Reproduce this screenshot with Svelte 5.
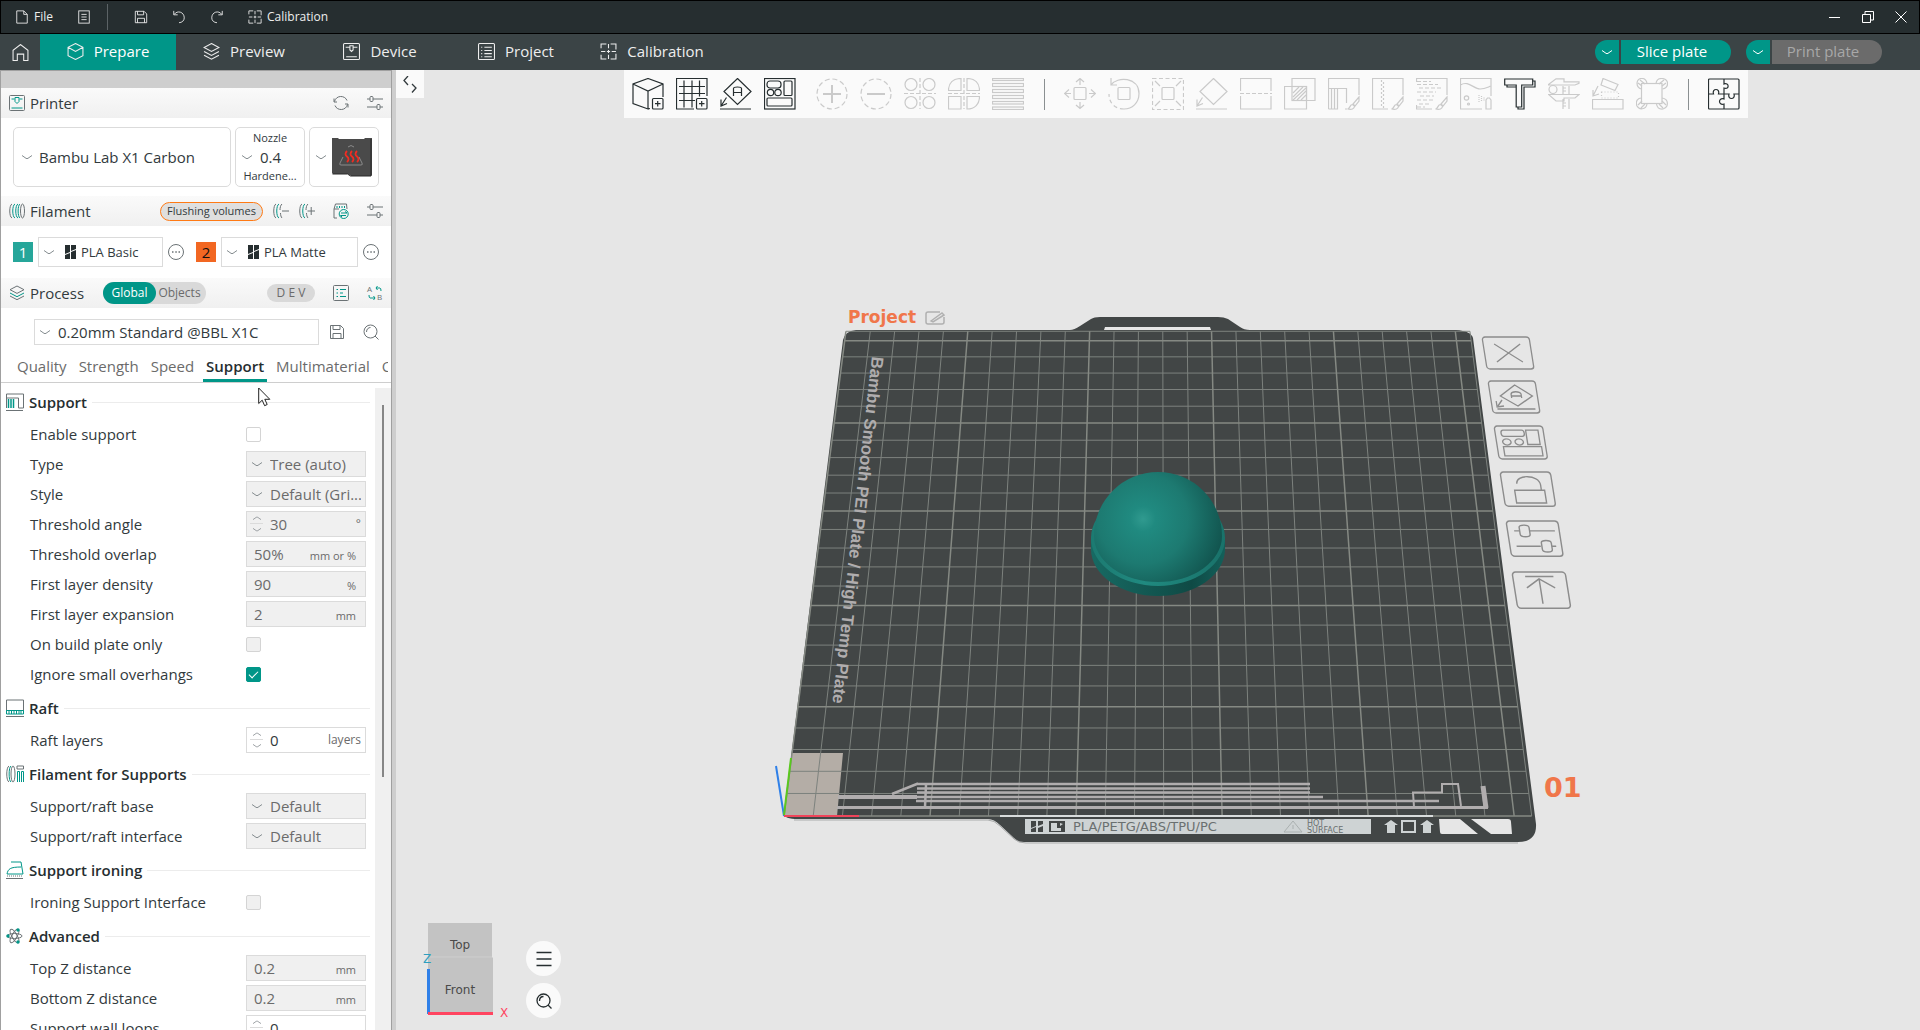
<script>
	const icons = {
		file: '<path d="M2 1h8l4 4v10H2zM10 1v4h4"/>',
		menu: '<rect x="2" y="1" width="12" height="14"/><path d="M5 5h6M5 8h6M5 11h6"/>',
		save: '<path d="M1.500 1.500h10l3 3v10h-13zM4 1.500v4h7v-4M4 14.500v-5h8v5"/>',
		undo: '<path d="M2 1v4.500h4.500M2.500 5C6 0 14 2 14 9c0 3-2.500 5.500-6 5.500"/>',
		redo: '<path d="M14 1v4.500H9.500M13.500 5C10 0 2 2 2 9c0 3 2.500 5.500 6 5.500"/>',
		calib: '<path d="M1 5V1h5M10 1h5v5M15 10v5h-5M6 15H1v-4M8 1v4M8 11v4M1 8h4M11 8h4M8 6.500v3M6.500 8h3"/>',
		home: '<path d="M1 15.500V6l7-5.500L15 6v9.500h-4V9.500H5v6z"/>',
		cube: '<path d="M8 .5l7 3.500v8L8 15.500 1 12V4zM1 4l7 4 7-4"/>',
		layers: '<path d="M8 .5l7 3.700-7 3.700-7-3.700zM1 8l7 3.700L15 8M1 11.500l7 3.700 7-3.700"/>',
		process: '<path d="M8 1l7 3.700-7 3.700-7-3.700zM1 11l7 3.700 7-3.700"/><path d="M1 8l7 3.700L15 8" stroke="#009688"/>',
		device: '<rect x=".5" y=".5" width="15" height="15" rx="1"/><path d="M3 13h10M2.500 4h4M9.500 4h4M6.500 2.500h3v4L8 8 6.500 6.500z"/>',
		printer: '<rect x=".5" y=".5" width="15" height="15" rx="1"/><path d="M2.500 13h11M2.500 4h3M10.500 4h3M6 2.500h4v4L8 8.500 6 6.500z" stroke="#009688"/>',
		project: '<rect x=".5" y=".5" width="15" height="15" rx="1"/><path d="M3 4h1M6 4h7M3 7h1M6 7h7M3 10h1M6 10h7M3 13h1M6 13h7"/>',
		sync: '<path d="M1.500 6.500C3 0 12 0 14 5.500M14.500 9.500C13 16 4 16 2 10.500M1 3.500v3.500h3M15 12.500V9h-3"/>',
		sliders: '<path d="M0 4h3M6 4h10M0 12h10M13 12h3"/><rect x="3" y="1.500" width="3" height="5" rx="1"/><rect x="10" y="9.500" width="3" height="5" rx="1"/>',
		spool: '<ellipse cx="13.500" cy="8" rx="2" ry="7"/><path d="M3 1C0 2 0 14 3 15" /><path d="M6 1C3 2 3 14 6 15M9 1C6 2 6 14 9 15M11 1C8.500 2 8.500 14 11 15" stroke="#009688"/>',
		spoolMinus: '<path d="M3 1C0 2 0 14 3 15M9 1C7.500 2 7 5 7 7M7.500 10c0 2 .5 4 1.500 5M9 8h7"/><path d="M6 1C3 2 3 14 6 15" stroke="#009688"/>',
		spoolPlus: '<path d="M3 1C0 2 0 14 3 15M9 1C7.500 2 7 5 7 7M7.500 10c0 2 .5 4 1.500 5M8.500 8H16M12.200 4v8"/><path d="M6 1C3 2 3 14 6 15" stroke="#009688"/>',
		ams: '<path d="M4 15H1V6L2.500 1h11L14 6M1 6h5"/><path d="M4 3v2M6.500 3v2M9 3v2M11.500 3v2M8 10h6l-2-1.500M13 12.500H7.500L9 14" stroke="#009688"/><circle cx="10.700" cy="11" r="4.500" stroke="#009688"/>',
		more: '<circle cx="8" cy="8" r="7.500"/><path d="M4 8h1.500M7.300 8h1.500M10.500 8H12" stroke-width="1.500"/>',
		list: '<rect x=".5" y=".5" width="15" height="15" rx="1"/><path d="M3.500 4.500H5M7 4.500h6M3.500 8H5M7 8h3M3.500 11.500H5M7 11.500h6" stroke="#009688"/>',
		search: '<circle cx="7.500" cy="7.500" r="6.500"/><path d="M12 12l3.500 3.500M3.500 8c0-3 2-4.500 4-4.500"/>',
		support: '<path d="M.5 15V1h17v14h-5V5H.5M0 17.500h17"/><path d="M2.500 6v9M5 6v9M7.500 6v9" stroke="#009688" stroke-width="1.500"/>',
		raft: '<path d="M.5 12V1h17v11M0 17.500h18"/><path d="M.5 11.500v3.500h17v-3.500zM3 12v3M5.500 12v3M8 12v3M10.500 12v3M13 12v3M15 12v3" stroke="#009688"/>',
		filSupport: '<ellipse cx="7" cy="9" rx="2" ry="8"/><path d="M3 1C0 2 0 16 3 17M11 1h6.500v3H11z"/><path d="M5 1C2.500 2 2.500 16 5 17M11.500 17V6.500h2V17M15.500 17V6.500h2V17" stroke="#009688"/>',
		iron: '<path d="M1 13C2 8 4 6 15 6M5 1h10l2 12H1" stroke="#009688"/><path d="M1 15h16" stroke-dasharray="1 1"/><path d="M0 17.500h17"/>',
		atom: '<g><ellipse cx="8.500" cy="9" rx="7.500" ry="2.500"/><ellipse cx="8.500" cy="9" rx="7.500" ry="2.500" transform="rotate(60 8.500 9)"/><ellipse cx="8.500" cy="9" rx="7.500" ry="2.500" transform="rotate(120 8.500 9)"/></g><g fill="#009688" stroke="none"><circle cx="2" cy="9" r="1.700"/><circle cx="12" cy="3" r="1.700"/><circle cx="12" cy="15" r="1.700"/></g>',
		down: '<path d="M0 .5L4 3.300Q5 4 6 3.300L10 .5"/>'
	};

	const plusBox = '<rect x="20.500" y="20.500" width="10.500" height="10.500" rx="1"/><path d="M25.700 23v5.500M23 25.700h5.500"/>';
	const brush = '<path d="M31 19l-6 7 2 2 4-5zM24.500 26.500c-3 0-2 4-5 4.500 4 1 7 0 7-3z"/>';

	const tools = {
		addCube: '<path d="M31 19V6L16 .5 1 6v19.500L16 31V13M1 6l15 7 15-7M16 31l2-.5"/>' + plusBox,
		addPlate: '<path d="M18 31H.5V.5H31V18M8 2.500v27M16 2.500v27M23.500 2.500v16M3 8.500h26M3 15.500h26M3 22.500h16"/>' + plusBox,
		orient: '<path d="M17.500 .5L31 13.500 17.500 26.500 4 13.500zM13.500 18v-7.500c0-2 8-2 8 0V18M13.500 14.500h8M0 31h31M6.500 19.500L1 28M1 21.500V28l6-2.500"/>',
		arrange: '<rect x=".5" y=".5" width="30.500" height="30.500"/><rect x="3" y="3" width="14" height="7" rx="3"/><rect x="20" y="3" width="8" height="14.500" rx="1"/><circle cx="6.500" cy="14.500" r="3.200"/><circle cx="14" cy="14.500" r="3.200"/><rect x="3" y="20" width="25" height="8" rx="1"/>',
		plus: '<circle cx="16" cy="16" r="15" stroke-dasharray="5 2.850"/><path d="M7 16h18M16 7v18" stroke-width="2"/>',
		minus: '<circle cx="16" cy="16" r="15" stroke-dasharray="5 2.850"/><path d="M7 16h18" stroke-width="2"/>',
		splitObj: '<circle cx="7" cy="6.500" r="6"/><circle cx="25" cy="6.500" r="6"/><circle cx="7" cy="24.500" r="6"/><circle cx="25" cy="24.500" r="6"/><path d="M16 0v31M0 15.500h32" stroke-dasharray="4 2"/>',
		splitPart: '<path d="M13 .5v12H.5C.5 5 5 .5 13 .5zM19 .5v12h12.500C31.500 5 27 .5 19 .5zM13 31V18.500H.5v12.500zM19 31V18.500h12.500C31.500 26 27 31 19 31z"/><path d="M16 0v31M0 15.500h32" stroke-dasharray="4 2"/>',
		layerH: '<rect x=".5" y=".5" width="31" height="2"/><rect x=".5" y="5.500" width="31" height="3"/><rect x=".5" y="11.500" width="31" height="3"/><rect x=".5" y="17.500" width="31" height="3"/><rect x=".5" y="23.500" width="31" height="2.500"/><rect x=".5" y="29" width="31" height="2.500"/>',
		move: '<rect x="10" y="9.500" width="12" height="12" rx="1"/><path d="M16 7V1M12 4l4-3.500L20 4M16 24v6M12 27l4 3.500 4-3.500M7 15.500H1M5 11.500l-4.500 4L5 19.500M25 15.500h6M27 11.500l4.500 4-4.500 4"/>',
		rotate: '<rect x="10" y="9.500" width="12" height="12" rx="1"/><path d="M3 0v7h6M3 7C9-2 31-1 31 15.500 31 25 24 31 16 31"/><path d="M16 31C7 31 1 25 1 16" stroke-dasharray="4 3"/>',
		scale: '<rect x=".5" y=".5" width="31" height="31" stroke-dasharray="4 2.500"/><rect x="10" y="9.500" width="12" height="12" rx="1"/><path d="M8 8L3 3M24 8l5-5M8 23l-5 5M24 23l5 5"/>',
		layFace: '<path d="M17.500 .5L31 13.500 17.500 26.500 4 13.500zM0 31h31M6.500 19.500L1 28M1 21.500V28l6-2.500"/>',
		cut: '<path d="M.5 13V.5H31V13M.5 18v13H31V18"/><path d="M0 15.500h32" stroke-dasharray="4 2"/>',
		boolean: '<path d="M8 8.500V.5h23v22h-8M22.500 8.500H.5V31h22z"/><rect x="8" y="8.500" width="14.500" height="14"/><path d="M9 15l6-6M9 19L19 9M9 22L22 10M13 22l9-9M17 22l5-5"/>',
		paintSup: '<path d="M.5 31V.5H31V17M.5 10.500h18V25M.5 31h9V10.500M3.500 11v20M6.500 11v20M17 31h2"/>' + brush,
		seam: '<path d="M16 31H.5V.5H31V17"/><path d="M9.500 2v27" stroke-dasharray="2 2"/><path d="M11.500 4v26" stroke-dasharray="2 2"/>' + brush,
		fuzzy: '<path d="M16 31H.5V27M.5 4V.5H31V17"/><path d="M1 3.500h14M1 6.500h21M3 10h22M1 14h19M4 18h14M1 22h18M3 26h11M1 29h8" stroke-dasharray="4 2"/>' + brush,
		color: '<path d="M22 31H.5V.5H31V18M.5 7C8 2 14 11 20 11c5 0 8-2 11-3"/><circle cx="6.500" cy="20" r="2.200"/><circle cx="8.500" cy="26" r="1"/><path d="M26 31v-9l1.500-2h2L31 22v9z"/><path d="M19 17v8M21.500 18v6M24 19.500v3" stroke-dasharray="1 1"/>',
		text: '<path d="M.7 1h28v6h-11v22h-5.500V7H.7z"/><path d="M28.700 3H31v6H20v22h-6v-2M3 7v2h9"/>',
		measure: '<path d="M.5 6.500L8 .8h8v3h15v1.500L27 7H.5zM.5 16.500h30.500L27 20H16v3H8zM15 8v8M21 8v8M15 21v10M21 21v10M15 10h3M15 13h3M15 25h3M15 28h3"/><circle cx="5" cy="11.500" r="4"/>',
		assemblyFace: '<path d="M11 .5l15 6-3 6L9 7zM.5 21.500H31V31H.5zM6 8l-5 10M1 12v6l6-2"/><path d="M9.500 14h17v6h-17z" stroke-dasharray="1 2"/>',
		brim: '<rect x="5.500" y="5.500" width="20.500" height="20"/><path d="M5.500 11C-1 9 0 0 6 .5c3 0 4.500 2 5 5M20 5.500c1-7 10-6 11.500-1 .5 4-2 6-5 6.500M26 20c7 1 7 9 1 11-4 .5-6-2-6.500-5M11 26c-1 6-8 6-10 2-2-5 1-8 4.500-8M2 5l4 3M4 2l5 4M30 5l-4 3M28 2l-5 4M2 27l4-4M5 30l4-4M30 27l-4-4M27 30l-4-4"/>',
		assembly: '<rect x=".5" y="1" width="30.500" height="30" rx="1"/><path d="M16 1v5c5-2 6 6 0 4v6M16 16v5c-6-2-6 7 0 5v5M.5 16h5c-2-6 7-6 5 0h5.500M16 16h5c-2 6 7 6 5 0h5"/>'
	};

	const toolGroups = [
		{ on: true, names: ['addCube', 'addPlate', 'orient', 'arrange'] },
		{ on: false, names: ['plus', 'minus', 'splitObj', 'splitPart', 'layerH'] },
		{ on: false, sep: true, names: ['move', 'rotate', 'scale', 'layFace', 'cut', 'boolean', 'paintSup', 'seam', 'fuzzy', 'color', 'text', 'measure', 'assemblyFace', 'brim'] },
		{ on: true, sep: true, names: ['assembly'] }
	];

	const mainTabs = [
		['Prepare', 'cube'],
		['Preview', 'layers'],
		['Device', 'device'],
		['Project', 'project'],
		['Calibration', 'calib']
	];

	const settingTabs = ['Quality', 'Strength', 'Speed', 'Support', 'Multimaterial', 'Others'];

	const sections = [
		{ title: 'Support', icon: 'support', rows: [
			{ label: 'Enable support', type: 'check' },
			{ label: 'Type', type: 'select', value: 'Tree (auto)', off: true },
			{ label: 'Style', type: 'select', value: 'Default (Gri...', off: true },
			{ label: 'Threshold angle', type: 'spin', value: '30', unit: '°', off: true },
			{ label: 'Threshold overlap', type: 'text', value: '50%', unit: 'mm or %', off: true },
			{ label: 'First layer density', type: 'text', value: '90', unit: '%', off: true },
			{ label: 'First layer expansion', type: 'text', value: '2', unit: 'mm', off: true },
			{ label: 'On build plate only', type: 'check', off: true },
			{ label: 'Ignore small overhangs', type: 'check', checked: true }
		] },
		{ title: 'Raft', icon: 'raft', rows: [
			{ label: 'Raft layers', type: 'spin', value: '0', unit: 'layers' }
		] },
		{ title: 'Filament for Supports', icon: 'filSupport', rows: [
			{ label: 'Support/raft base', type: 'select', value: 'Default', off: true },
			{ label: 'Support/raft interface', type: 'select', value: 'Default', off: true }
		] },
		{ title: 'Support ironing', icon: 'iron', rows: [
			{ label: 'Ironing Support Interface', type: 'check', off: true }
		] },
		{ title: 'Advanced', icon: 'atom', rows: [
			{ label: 'Top Z distance', type: 'text', value: '0.2', unit: 'mm', off: true },
			{ label: 'Bottom Z distance', type: 'text', value: '0.2', unit: 'mm', off: true },
			{ label: 'Support wall loops', type: 'spin', value: '0', unit: '' }
		] }
	];

	// bed millimetres -> scene coordinates
	function project(u, v) {
		const w = 1 + 0.000774 * v;
		return [(784 + 2.9207 * u + 0.8965 * v) / w, (816 - 1.637 * v) / w];
	}

	function line(a, b) {
		return 'M' + project(...a).join(' ') + 'L' + project(...b).join(' ');
	}

	let thin = '';
	let thick = '';
	for (let i = 0; i <= 25; i++) {
		const d = line([i * 10, 0], [i * 10, 256]) + line([0, i * 10], [256, i * 10]);
		if (i % 5 == 0) thick += d;
		else thin += d;
	}
	thin += line([256, 0], [256, 256]) + line([0, 256], [256, 256]);

	// plate buttons, drawn in a 48x32 box and skewed onto the bed plane
	const plateIcons = [
		{ x: 1482, y: 337, s: 1, d: 'M11 7l26 18M37 7L11 25' },
		{ x: 1488, y: 381, s: 1, d: 'M26 4l16 11-16 10L10 15zM21 17v-4c1-3 9-3 10 0v4M21 15h10M5 28h38M11 19l-5 6M5 20v6l7-1' },
		{ x: 1494, y: 426, s: 1.03, d: 'M8 4h18c3 0 3 6 0 6H8c-3 0-3-6 0-6zM30 4h12v14H30zM6 20h37v9H6zM10 12.500a4 3 0 1 0 .1 0M22 12.500a4 3 0 1 0 .1 0' },
		{ x: 1500, y: 472, s: 1.07, d: 'M11 17h28v12H11zM14 11C14 2 36 2 36 12v5' },
		{ x: 1506, y: 521, s: 1.1, d: 'M6 9h5M20 9h23M6 23h22M38 23h4M11 6c0-3 9-3 9 0v6c0 3-9 3-9 0zM29 20c0-3 9-3 9 0v6c0 3-9 3-9 0z' },
		{ x: 1512, y: 572, s: 1.13, d: 'M11 4h25M23 6v22M11 14L23 6l13 8' }
	];
</script>

{#snippet icon(name, size = 16)}
	<svg class="icon" width={size} height={size} viewBox={size == 18 ? '0 0 18 18' : '0 0 16 16'} aria-hidden="true">{@html icons[name]}</svg>
{/snippet}

{#snippet chevron()}
	<svg class="chev" width="10" height="5" viewBox="0 0 10 5" aria-hidden="true">{@html icons.down}</svg>
{/snippet}

<div class="app">
	<header class="titlebar">
		<button>{@render icon('file', 14)} File</button>
		<button aria-label="Menu">{@render icon('menu', 14)}</button>
		<span class="split"></span>
		<button aria-label="Save">{@render icon('save', 14)}</button>
		<button aria-label="Undo">{@render icon('undo', 14)}</button>
		<button aria-label="Redo">{@render icon('redo', 14)}</button>
		<button>{@render icon('calib', 14)} Calibration</button>
		<div class="window-buttons">
			<button aria-label="Minimize"><svg width="12" height="12"><path d="M0 6.500h11" /></svg></button>
			<button aria-label="Restore"><svg width="12" height="12"><path d="M.5 3.500h8v8h-8zM3 3V.5h8.500V9H9" /></svg></button>
			<button aria-label="Close"><svg width="12" height="12"><path d="M.5 .5l11 11M11.500 .5l-11 11" /></svg></button>
		</div>
	</header>

	<nav class="tabbar">
		<button class="home" aria-label="Home">{@render icon('home', 17)}</button>
		{#each mainTabs as [name, ic]}
			<button class="tab" class:active={name == 'Prepare'}>{@render icon(ic, 17)} {name}</button>
		{/each}
		<div class="actions">
			<div class="pill">
				<button class="arrow" aria-label="Slice options">{@render chevron()}</button>
				<button class="go">Slice plate</button>
			</div>
			<div class="pill">
				<button class="arrow" aria-label="Print options">{@render chevron()}</button>
				<button class="go" disabled>Print plate</button>
			</div>
		</div>
	</nav>

	<main>
		<aside>
			<div class="strip"></div>
			<div class="head">
				{@render icon('printer')}
				<h2>Printer</h2>
				<button aria-label="Sync">{@render icon('sync')}</button>
				<button aria-label="Printer settings">{@render icon('sliders')}</button>
			</div>
			<div class="cards">
				<div class="card machine">
					{@render chevron()}
					<select aria-label="Printer"><option>Bambu Lab X1 Carbon</option></select>
				</div>
				<div class="card nozzle">
					<label for="nozzle">Nozzle</label>
					<div>{@render chevron()}<select id="nozzle"><option>0.4</option></select></div>
					<span>Hardene...</span>
				</div>
				<button class="card bed" aria-label="Plate type">
					{@render chevron()}
					<svg width="40" height="40" viewBox="0 0 40 40">
						<path d="M0 1h6l1 1h25l1-1h7v37l-1 1H19l-3-2H1l-1-1z" fill="#4a4a4a" />
						<path d="M.5 37h15l3 2H39V2" fill="none" stroke="#2b2b2b" />
						<path d="M11 20l-3 6q-1 2 1 2h20q2 0 1-2l-3-6M16 10q3-3 6 0" fill="none" stroke="#8a8a8a" />
						<path d="M15 14q-3 3 0 5.500t0 5.500M20 14q-3 3 0 5.500t0 5.500M25 14q-3 3 0 5.500t0 5.500" fill="none" stroke="#f02c22" stroke-width="1.800" />
					</svg>
				</button>
			</div>

			<div class="head">
				{@render icon('spool')}
				<h2>Filament</h2>
				<button class="flush">Flushing volumes</button>
				<button class="near" aria-label="Remove filament">{@render icon('spoolMinus')}</button>
				<button class="near" aria-label="Add filament">{@render icon('spoolPlus')}</button>
				<button aria-label="Sync AMS">{@render icon('ams')}</button>
				<button aria-label="Filament settings">{@render icon('sliders')}</button>
			</div>
			<div class="filaments">
				{#each [['1', 'PLA Basic', '#26a69a', '#fff'], ['2', 'PLA Matte', '#f26722', '#111']] as [n, name, bg, fg]}
					<div class="filament">
						<button class="swatch" style="background: {bg}; color: {fg}">{n}</button>
						<div class="combo">
							{@render chevron()}
							<svg class="brand" width="11" height="14" viewBox="0 0 11 14" aria-hidden="true"><path d="M0 0h5v7L0 9zM6 0h5v4L6 6zM6 7l5-2v9H6zM0 10l5-2v6H0z" /></svg>
							<select aria-label="Filament {n}"><option>{name}</option></select>
						</div>
						<button aria-label="Edit filament {n}">{@render icon('more')}</button>
					</div>
				{/each}
			</div>

			<div class="head">
				{@render icon('process')}
				<h2>Process</h2>
				<div class="scope">
					<button class="active">Global</button>
					<button>Objects</button>
				</div>
				<button class="dev">D E V</button>
				<button aria-label="Parameter list">{@render icon('list')}</button>
				<button aria-label="Compare presets">
					<svg class="icon compare" width="16" height="16" viewBox="0 0 16 16">
						<text x="0" y="7">A</text>
						<text x="10" y="15">B</text>
						<path d="M9 3h4q1 0 1 3M10.500 1L9 3l1.500 2M2 10q0 3 1 3h5M6.500 11L8 13l-1.500 2" stroke="#009688" />
					</svg>
				</button>
			</div>
			<div class="preset">
				<div class="combo">
					{@render chevron()}
					<select aria-label="Process preset"><option>0.20mm Standard @BBL X1C</option></select>
				</div>
				<button aria-label="Save preset">{@render icon('save')}</button>
				<button aria-label="Search settings">{@render icon('search')}</button>
			</div>
			<nav class="pages">
				{#each settingTabs as t}
					<button class:active={t == 'Support'}>{t}</button>
				{/each}
			</nav>

			<div class="scroll">
				<div class="settings">
					{#each sections as s}
						<h3>{@render icon(s.icon, 18)}<span>{s.title}</span></h3>
						{#each s.rows as r}
							{@const id = r.label.toLowerCase().replace(/\W+/g, '-')}
							<div class="row">
								<label for={id}>{r.label}</label>
								{#if r.type == 'check'}
									<input {id} type="checkbox" checked={r.checked} disabled={r.off} />
								{:else}
									<div class="field" class:off={r.off}>
										{#if r.type == 'select'}
											{@render chevron()}
											<select {id} disabled={r.off}><option>{r.value}</option></select>
										{:else}
											{#if r.type == 'spin'}
												<span class="spin">
													<button class="up" aria-label="Increase" disabled={r.off}>{@render chevron()}</button>
													<button aria-label="Decrease" disabled={r.off}>{@render chevron()}</button>
												</span>
											{/if}
											<input {id} type="text" value={r.value} disabled={r.off} />
											<span class="unit" class:wide={r.type == 'spin'}>{r.unit}</span>
										{/if}
									</div>
								{/if}
							</div>
						{/each}
					{/each}
				</div>
				<div class="track"><div class="thumb"></div></div>
			</div>

			<svg class="cursor" width="13" height="20" viewBox="0 0 13 20" aria-hidden="true">
				<path d="M.7 1v15.500l3.500-3.300 2.400 5.500 2.600-1.200-2.400-5.200h5z" fill="#fff" stroke="#222" />
			</svg>
		</aside>

		<section class="canvas">
			<svg class="scene" viewBox="396 70 1524 960">
				<defs>
					<radialGradient id="dome" gradientUnits="userSpaceOnUse" cx="1143" cy="519" r="90">
						<stop offset="0" stop-color="#309a8f" />
						<stop offset=".14" stop-color="#208a80" />
						<stop offset=".5" stop-color="#1d7a71" />
						<stop offset="1" stop-color="#0f4c47" />
					</radialGradient>
					<linearGradient id="rim">
						<stop offset="0" stop-color="#1c7a71" />
						<stop offset=".4" stop-color="#208a80" />
						<stop offset="1" stop-color="#19726a" />
					</linearGradient>
					<linearGradient id="side">
						<stop offset="0" stop-color="#176a63" />
						<stop offset=".75" stop-color="#0f4a45" />
						<stop offset="1" stop-color="#13605a" />
					</linearGradient>
				</defs>

				<path d="M794 820H988Q994 820 1000 826L1014 839Q1018 843 1026 843H1518" fill="none" stroke="#a9abab" />
				<path fill="#424646" d="M843 340Q845 331 856 330H1070Q1074 330 1080 326L1091 319Q1094 317 1100 317H1218Q1224 317 1228 319L1240 327Q1244 330 1250 330H1456Q1471 331 1473 338L1536 824Q1537 842 1518 842H1024Q1018 842 1014 838L1000 825Q994 819 988 819H798Q784 819 784 814Z" />
				<path d="M1105 327h105l1 3h-107z" fill="#e6e6e6" />
				<path d="M792 753h51l-6 63h-53z" fill="#b4ada6" />
				<path d={thin} fill="none" stroke="#7d827e" />
				<path d={thick} fill="none" stroke="#858983" stroke-width="1.500" />

				<g fill="none" stroke="#b0adae" stroke-width="2.500">
					<path d="M917 784h393M917 788.500h393M917 792.500h393M838 797h485M916 801h523M892 794l26-10.500M926 785l-1 22" />
					<path d="M838 797h79" stroke-width="4" />
					<path d="M837 807.500h651" stroke-width="3" />
					<path d="M1414 807l-1-14.500h29v-8.500h16l3 22" stroke-width="2" />
					<path d="M1483 786l3 22" stroke-width="5" />
				</g>
				<path d="M1000 816h433" stroke="#d8dcdc" stroke-width="2" />
				<path d="M1025 819h346v15h-346z" fill="#ced3d4" />
				<path fill="#424646" d="M1031 821h5v5l-5 2zM1038 821h5v3l-5 2zM1038 828l5-2v6h-5zM1031 829l5-2v5h-5zM1049 821h16v11h-16z" />
				<path fill="#ced3d4" d="M1051 823h6v5h4v3h-10zM1060 823l3 1-3 2z" />
				<path d="M1293 821l9 11h-18zM1293 825v4" fill="none" stroke="#aab0b0" />
				<text class="plate-tag" x="1073" y="831">PLA/PETG/ABS/TPU/PC</text>
				<text class="plate-hot" x="1307" y="826">HOT</text>
				<text class="plate-hot" x="1307" y="833">SURFACE</text>
				<path fill="#ced3d4" d="M1391 820l7 5h-3v8h-8v-8h-3zM1427 820l7 5h-3v8h-8v-8h-3z" />
				<rect x="1402" y="821" width="13" height="11" fill="none" stroke="#ced3d4" stroke-width="2" />
				<path fill="#e6e6e6" d="M1439 819h21l18 15h-36q-2 0-2-2zM1471 819h37q3 0 3 3l1 12h-21z" />

				<text class="plate-name" transform="translate(872 356) rotate(96.500)">Bambu Smooth PEI Plate / High Temp Plate</text>

				<path d="M784 816L776 766" stroke="#2f80e8" stroke-width="2" />
				<path d="M784 815L791 758" stroke="#5ac81e" stroke-width="2" />
				<path d="M784 816h75" stroke="#f0445a" stroke-width="2" />

				<path d="M1091 538v11A67 47 0 0 0 1225 549v-11z" fill="url(#side)" />
				<ellipse cx="1158" cy="538" rx="67" ry="48" fill="url(#rim)" />
				<path d="M1094 536A64 64 0 0 1 1222 536A64 46 0 0 1 1094 536" fill="url(#dome)" />

				<text class="plate-title" x="848" y="323">Project</text>
				<g fill="none" stroke="#b0b0b0" stroke-width="1.500">
					<path d="M940 312h-12q-2 0-2 2v8q0 2 2 2h14q2 0 2-2v-5M931 321l11-8 2 2-11 7z" />
				</g>
				<text class="plate-number" x="1544" y="797">01</text>

				{#each plateIcons as p}
					<g transform="translate({p.x} {p.y}) scale({p.s}) skewX(9)" class="plate-icon">
						<rect width="47" height="32" rx="3" />
						<path d={p.d} />
					</g>
				{/each}
			</svg>

			<div class="toolbar-wrap">
				<button class="collapse" aria-label="Collapse sidebar">
					<svg width="14" height="17" viewBox="0 0 14 17"><path d="M5 0L1 4.500 5 9M9 8l4 4-4 4.500" /></svg>
				</button>
				<div class="toolbar">
					{#each toolGroups as g}
						{#if g.sep}<span class="sep"></span>{/if}
						<div class="group">
							{#each g.names as n}
								<button class:on={g.on || n == 'text'} aria-label={n}>
									<svg width="32" height="32" viewBox="0 0 32 32">{@html tools[n]}</svg>
								</button>
							{/each}
						</div>
					{/each}
				</div>
			</div>

			<svg class="navcube" width="96" height="104" viewBox="0 0 96 104">
				<path d="M8 7h64v34l1 1v54H8z" fill="#c3c3c3" />
				<path d="M8 41h64" stroke="#cecece" />
				<text x="40" y="33" text-anchor="middle">Top</text>
				<text x="40" y="78" text-anchor="middle">Front</text>
				<path d="M8.500 53v45" stroke="#2f80e8" stroke-width="3" />
				<path d="M8 97.500h65" stroke="#ff4560" stroke-width="3" />
				<text x="3" y="47" class="z">Z</text>
				<text x="80" y="101" class="x">X</text>
			</svg>
			<div class="round">
				<button aria-label="View menu"><svg width="16" height="16"><path d="M.5 1.500h15M.5 8h15M.5 14.500h15" /></svg></button>
				<button aria-label="Zoom">{@render icon('search')}</button>
			</div>
		</section>
	</main>
</div>

<style>
	:global(body) {
		margin: 0;
	}

	.app {
		display: flex;
		flex-direction: column;
		height: 100vh;
		overflow: hidden;
		font-family: "Open Sans", "Noto Sans", sans-serif;
		font-size: 15px;
		line-height: 20px;
		color: #323a3d;
	}

	button, select, input {
		font: inherit;
		color: inherit;
		background: none;
		border: 0;
		padding: 0;
		margin: 0;
	}

	button {
		display: flex;
		align-items: center;
		justify-content: center;
		flex-shrink: 0;
	}

	select {
		appearance: none;
		flex: 1;
		min-width: 0;
		opacity: 1;
	}

	svg {
		display: block;
		flex-shrink: 0;
	}

	.icon, .chev {
		fill: none;
		stroke: #6b7275;
	}

	.compare {
		overflow: visible;
	}

	.compare text {
		fill: #6b7275;
		stroke: none;
		font-size: 8px;
	}

	.chev {
		stroke: #858c8f;
	}

	.titlebar {
		display: flex;
		align-items: center;
		box-sizing: border-box;
		height: 34px;
		padding-left: 14px;
		border: 1px solid #000;
		background: #262e30;
		color: #eee;
		font-size: 12px;
	}

	.titlebar .icon, .tabbar .icon {
		stroke: #eee;
	}

	.titlebar button {
		gap: 5px;
		margin-right: 24px;
	}

	.titlebar .split {
		width: 1px;
		height: 26px;
		margin: 0 26px 0 -8px;
		background: #5c6366;
	}

	.window-buttons {
		display: flex;
		margin-left: auto;
		padding-right: 12px;
		gap: 21px;
	}

	.window-buttons button {
		margin: 0;
	}

	.window-buttons svg {
		fill: none;
		stroke: #fff;
	}

	.tabbar {
		display: flex;
		height: 36px;
		background: #3b4446;
		color: #eee;
	}

	.tabbar .home {
		width: 40px;
	}

	.tabbar .tab {
		width: 136px;
		padding-bottom: 2px;
		gap: 10px;
	}

	.tabbar .tab.active {
		background: #009688;
		color: #fff;
	}

	.actions {
		display: flex;
		align-items: center;
		gap: 15px;
		margin-left: auto;
		padding-right: 38px;
	}

	.pill {
		display: flex;
		gap: 2px;
		height: 24px;
		overflow: hidden;
		border-radius: 12px;
	}

	.pill .arrow {
		width: 24px;
		background: #009688;
	}

	.pill .arrow .chev {
		stroke: #fff;
	}

	.pill .go {
		box-sizing: border-box;
		width: 110px;
		padding: 0 8px 2px 0;
		background: #009688;
		color: #fff;
	}

	.pill .go:disabled {
		background: #6b6b6b;
		color: #a8a8a8;
	}

	main {
		display: flex;
		flex: 1;
		min-height: 0;
	}

	aside {
		position: relative;
		display: flex;
		flex-direction: column;
		box-sizing: border-box;
		flex: 0 0 392px;
		min-width: 0;
		border: 1px solid #a0a0a0;
		border-bottom: 0;
		background: #fff;
	}

	.strip {
		height: 17px;
		background: #cecece;
		flex-shrink: 0;
	}

	.head {
		display: flex;
		align-items: center;
		height: 30px;
		flex-shrink: 0;
		padding: 0 8px;
		background: linear-gradient(#fafafa, #f0f0f0);
	}

	.head h2 {
		margin: 0 auto 0 5px;
		font-size: 15px;
		font-weight: 400;
	}

	.head button {
		margin-left: 18px;
	}

	.head .near {
		margin-left: 10px;
	}

	.head .flush {
		box-sizing: border-box;
		height: 19px;
		width: 103px;
		border: 1px solid #ff7a14;
		border-radius: 10px;
		background: #dfdfdf;
		font-size: 11px;
	}

	.cards {
		display: flex;
		gap: 4px;
		padding: 9px 12px;
		flex-shrink: 0;
	}

	.card {
		display: flex;
		align-items: center;
		box-sizing: border-box;
		width: 70px;
		height: 60px;
		border: 1px solid #dbdbdb;
		border-radius: 5px;
	}

	.machine {
		flex: 1;
		padding-left: 8px;
		gap: 7px;
	}

	.nozzle {
		flex-direction: column;
		justify-content: center;
		font-size: 11px;
		line-height: 18px;
	}

	.nozzle div {
		display: flex;
		align-items: center;
		width: 56px;
		gap: 8px;
		font-size: 15px;
		line-height: 20px;
	}

	.bed {
		gap: 6px;
	}

	.filaments {
		display: flex;
		gap: 12px;
		padding: 11px 12px;
		flex-shrink: 0;
	}

	.filament {
		display: flex;
		align-items: center;
		flex: 171;
		min-width: 0;
		gap: 5px;
		font-size: 13px;
	}

	.filament + .filament {
		flex-grow: 183;
	}

	.swatch {
		width: 20px;
		height: 20px;
		font-size: 15px;
	}

	.combo {
		display: flex;
		align-items: center;
		box-sizing: border-box;
		flex: 1;
		min-width: 0;
		height: 30px;
		padding-left: 5px;
		gap: 8px;
		border: 1px solid #dbdbdb;
	}

	.filament .brand {
		margin-left: 6px;
		fill: #262e30;
	}

	.filament .combo {
		gap: 5px;
	}

	.scope {
		display: flex;
		height: 22px;
		margin-right: 61px;
		border-radius: 11px;
		background: #d9d9d9;
		color: #6b6b6b;
		font-size: 12px;
	}

	.head .scope button {
		width: 50px;
		padding-right: 3px;
		box-sizing: border-box;
		margin: 0;
	}

	.head .scope .active {
		width: 53px;
		padding: 0;
		border-radius: 11px;
		background: #009688;
		color: #fff;
	}

	.head .dev {
		width: 48px;
		height: 18px;
		margin: 0;
		border-radius: 9px;
		background: #d9d9d9;
		color: #6b6b6b;
		font-size: 12px;
	}

	.preset {
		display: flex;
		align-items: center;
		gap: 18px;
		flex-shrink: 0;
		padding: 11px 12px 0 33px;
	}

	.preset .combo {
		height: 26px;
		margin-right: -8px;
	}

	.pages {
		display: flex;
		gap: 6px;
		height: 37px;
		flex-shrink: 0;
		padding-left: 13px;
		margin-right: 3px;
		overflow: hidden;
		color: #6b6b6b;
	}

	.pages button {
		box-sizing: border-box;
		padding: 10px 3px 2px;
		border-bottom: 3px solid transparent;
	}

	.pages .active {
		border-color: #009688;
		color: #262e30;
		font-weight: 600;
	}

	.scroll {
		display: flex;
		flex: 1;
		min-height: 0;
		overflow: hidden;
		border-top: 1px solid #cecece;
	}

	.settings {
		flex: 1;
		min-width: 0;
	}

	h3 {
		display: flex;
		align-items: center;
		box-sizing: border-box;
		height: 36px;
		margin: 0;
		padding: 2px 5px 0;
		gap: 5px;
		font-size: 15px;
		font-weight: 600;
		color: #262e30;
	}

	h3::after {
		content: "";
		flex: 1;
		height: 1px;
		background: #ececec;
	}

	.row {
		display: flex;
		align-items: center;
		height: 30px;
		padding: 0 9px 0 29px;
	}

	.row label {
		width: 216px;
		flex-shrink: 0;
	}

	.row input[type="checkbox"] {
		appearance: none;
		box-sizing: border-box;
		width: 15px;
		height: 15px;
		border: 1px solid #d4d4d4;
		border-radius: 2px;
	}

	.row input[type="checkbox"]:disabled {
		background: #f0f0f0;
	}

	.row input[type="checkbox"]:checked {
		border-color: #009688;
		background: #009688;
	}

	.row input[type="checkbox"]:checked::after {
		content: "";
		display: block;
		width: 8px;
		height: 4px;
		margin: 3px 0 0 2px;
		border: solid #fff;
		border-width: 0 0 1px 1px;
		transform: rotate(-45deg);
	}

	.field {
		display: flex;
		align-items: center;
		box-sizing: border-box;
		flex: 1;
		min-width: 0;
		height: 26px;
		padding: 0 4px 0 5px;
		gap: 8px;
		border: 1px solid #dbdbdb;
	}

	.field.off {
		background: #f0f0f0;
		color: #6b6b6b;
	}

	.field input {
		flex: 1;
		width: 20px;
		min-width: 0;
		margin-left: 2px;
	}

	.field .spin + input {
		margin-left: 1px;
	}

	.spin {
		display: flex;
		flex-direction: column;
		width: 13px;
		margin: 0 -2px;
	}

	.spin button {
		height: 12px;
	}

	.spin .up {
		border-bottom: 1px solid #dbdbdb;
	}

	.spin .chev {
		width: 8px;
		height: 4px;
	}

	.spin .up .chev {
		transform: scaleY(-1);
	}

	.unit {
		padding: 4px 5px 0 0;
		font-size: 11px;
		color: #6b6b6b;
	}

	.unit.wide {
		padding: 0;
		font-size: 12px;
	}

	.track {
		width: 16px;
		margin-top: 5px;
		background: #f0f0f0;
	}

	.thumb {
		width: 2px;
		height: 58%;
		margin: 17px 0 0 7px;
		background: #868686;
	}

	.cursor {
		position: absolute;
		left: 257px;
		top: 316px;
	}

	.canvas {
		position: relative;
		flex: 1;
		min-width: 0;
		border-left: 4px solid #cecece;
		background: #e6e6e6;
	}

	.scene {
		position: absolute;
		inset: 0;
		width: 100%;
		height: 100%;
	}

	.plate-tag, .plate-hot {
		fill: #6a7070;
		font-family: "DejaVu Sans", sans-serif;
		font-size: 13px;
	}

	.plate-hot {
		font-size: 8px;
	}

	.plate-name {
		fill: #b0adae;
		font-family: "Liberation Sans", sans-serif;
		font-size: 17px;
		font-weight: 700;
	}

	.plate-title, .plate-number {
		fill: #f0764a;
		font-family: "DejaVu Sans", sans-serif;
		font-size: 17px;
		font-weight: 700;
	}

	.plate-number {
		font-size: 27px;
	}

	.plate-icon {
		fill: none;
		stroke: #8c8c8c;
		stroke-width: 1.300;
	}

	.toolbar-wrap {
		position: relative;
		display: flex;
		align-items: flex-start;
	}

	.collapse {
		width: 28px;
		height: 28px;
		margin-right: 28px;
		background: #fafafa;
	}

	.collapse svg {
		fill: none;
		stroke: #323a3d;
		stroke-width: 1.300;
	}

	.toolbar {
		display: flex;
		align-items: center;
		height: 48px;
		margin: 0 auto;
		padding: 0 8px;
		background: #fafafa;
		gap: 20px;
	}

	.group {
		display: flex;
		gap: 12px;
	}

	.toolbar button {
		color: #cacaca;
	}

	.toolbar button.on {
		color: #262e30;
	}

	.toolbar svg {
		fill: none;
		stroke: currentColor;
		stroke-width: 1.200;
	}

	.sep {
		width: 1px;
		height: 31px;
		margin-right: -1px;
		background: #8a8f91;
	}

	.navcube {
		position: absolute;
		left: 24px;
		bottom: 10px;
		font-family: "DejaVu Sans", sans-serif;
		font-size: 12px;
		fill: #4a4a4a;
	}

	.navcube .z {
		fill: #2f9fc0;
	}

	.navcube .x {
		fill: #ff4560;
	}

	.round {
		position: absolute;
		left: 130px;
		bottom: 12px;
		display: flex;
		flex-direction: column;
		gap: 7px;
	}

	.round button {
		width: 35px;
		height: 35px;
		border-radius: 50%;
		background: #fafafa;
	}

	.round svg {
		fill: none;
		stroke: #262e30;
		stroke-width: 1.300;
	}
</style>
